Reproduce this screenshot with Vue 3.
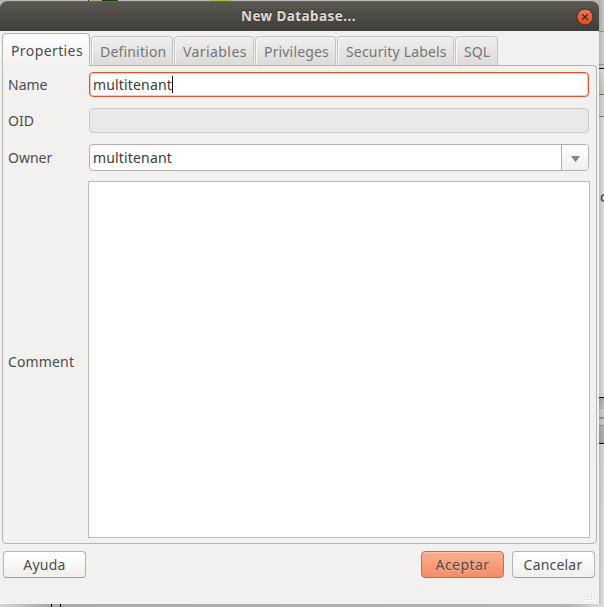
<script setup>
import { ref } from 'vue'

const tabs = [
  { label: 'Properties', cls: 'properties' },
  { label: 'Definition', cls: 'definition' },
  { label: 'Variables', cls: 'variables' },
  { label: 'Privileges', cls: 'privileges' },
  { label: 'Security Labels', cls: 'security' },
  { label: 'SQL', cls: 'sql' },
]
const active = ref('Properties')
const grip = [[10, 0], [7, 3], [10, 3], [4, 6], [7, 6], [10, 6], [1, 9], [4, 9], [7, 9], [10, 9]]
</script>

<template>
  <div class="desktop">
    <div class="top-strip"><i class="a"></i><i class="b"></i><i class="c"></i><i class="d"></i></div>
    <div class="middle">
      <section class="dialog">
        <header class="titlebar">
          <span class="title">New Database...</span>
          <svg class="close" width="18" height="18" viewBox="0 0 18 18">
            <defs>
              <linearGradient id="closeFill" x1="0" y1="0" x2="0" y2="1">
                <stop offset="0" stop-color="#f4794f" />
                <stop offset="1" stop-color="#df4a1c" />
              </linearGradient>
            </defs>
            <circle cx="9" cy="9" r="8" fill="url(#closeFill)" stroke="#35302b" />
            <path d="M6.2 6.2L11.8 11.8M11.8 6.2L6.2 11.8" stroke="#45261a" stroke-width="1.3" />
          </svg>
        </header>
        <nav class="tabs">
          <div v-for="t in tabs" :key="t.label" class="tab" :class="[t.cls, { active: active === t.label }]">
            <span>{{ t.label }}</span>
          </div>
        </nav>
        <main class="panel">
          <div class="row name-row"><label>Name</label><div class="field focus"><span class="value">multitenant</span><i class="caret"></i></div></div>
          <div class="row oid-row"><label>OID</label><div class="field disabled"></div></div>
          <div class="row owner-row">
            <label>Owner</label>
            <div class="field combo">
              <span class="value">multitenant</span>
              <div class="drop"><svg width="9" height="6" viewBox="0 0 9 6"><path d="M.7.5H8.3L4.5 5.5Z" fill="#858585" stroke="#666" stroke-width=".6" /></svg></div>
            </div>
          </div>
          <div class="row comment-row"><label>Comment</label><div class="area"></div></div>
        </main>
        <footer class="actions">
          <div class="btn help"><span>Ayuda</span></div>
          <div class="btn primary"><span>Aceptar</span></div>
          <div class="btn cancel"><span>Cancelar</span></div>
        </footer>
        <div class="resize">
          <svg width="12" height="12" viewBox="0 0 12 12">
            <g v-for="(p, i) in grip" :key="i">
              <rect :x="p[0]" :y="p[1]" width="2" height="2" fill="#fff" />
              <rect :x="p[0]" :y="p[1]" width="1" height="1" fill="#cfcecc" />
            </g>
          </svg>
        </div>
      </section>
      <div class="side"><span class="peek">c</span></div>
    </div>
    <div class="bottom-strip"><i></i><i></i></div>
  </div>
</template>

<style>
body {
  margin: 0;
  overflow: hidden;
}
</style>

<style scoped>
* {
  box-sizing: border-box;
}
.desktop {
  width: 604px;
  height: 607px;
  overflow: hidden;
  display: flex;
  flex-direction: column;
  background: #b9b9b7;
  font-family: "Noto Sans", "Open Sans", sans-serif;
  font-size: 14px;
  line-height: 20px;
  color: #4c4c4c;
  white-space: nowrap;
}
.top-strip {
  height: 1px;
  display: flex;
  flex: none;
}
.top-strip .a { width: 1px; margin-left: 88px; background: #222; }
.top-strip .b { width: 13px; background: #b5a888; }
.top-strip .c { width: 16px; background: #173f14; }
.top-strip .d { width: 20px; margin-left: 93px; background: #a9bd4c; }
.middle {
  display: flex;
  height: 603px;
}
.dialog {
  width: 599px;
  height: 603px;
  display: flex;
  flex-direction: column;
  background: #f2f1f0;
  border-radius: 7px 7px 0 0;
}
.titlebar {
  height: 30px;
  flex: none;
  display: flex;
  align-items: center;
  justify-content: flex-end;
  padding-right: 5px;
  border-radius: 7px 7px 0 0;
  background: linear-gradient(#59574f, #3f3e39);
  border-top: 1px solid #65635b;
}
.title {
  flex: 1;
  margin-top: -1px;
  padding-left: 241px;
  font-weight: 700;
  font-size: 13.5px;
  letter-spacing: .42px;
  color: #dfdbd2;
  text-shadow: 0 -1px 0 #2c2b28;
}
.tabs {
  height: 34px;
  flex: none;
  display: flex;
  align-items: flex-end;
  gap: 1px;
  padding-left: 2px;
}
.tab {
  height: 30px;
  padding: 5px 0 0 8px;
  margin-bottom: -1px;
  border: 1px solid #c5c4c2;
  border-bottom-color: #b6b5b1;
  border-radius: 4px 4px 0 0;
  background: linear-gradient(#f0efee, #dcdbd9);
  box-shadow: inset 1px 1px 0 #f8f8f7;
  color: #757575;
}
.tab.active {
  position: relative;
  height: 33px;
  padding-top: 7px;
  background: linear-gradient(#fff, #f2f1f0);
  border-color: #b6b5b1;
  border-bottom: 0;
  color: #4c4c4c;
}
.properties { width: 88px; letter-spacing: .4px; }
.definition { width: 82px; letter-spacing: .18px; }
.variables { width: 80px; letter-spacing: .42px; }
.privileges { width: 81px; letter-spacing: .16px; }
.security { width: 117px; letter-spacing: .17px; }
.sql { width: 43px; letter-spacing: .1px; }
.panel {
  width: 595px;
  height: 479px;
  flex: none;
  margin-left: 2px;
  padding: 6px 5px 0;
  border: 1px solid #b6b5b1;
  border-radius: 0 4px 4px 4px;
}
.row {
  display: flex;
  align-items: center;
}
.row label {
  width: 81px;
  flex: none;
}
.field {
  width: 500px;
  border: 1px solid #b3b1ad;
  border-radius: 4px;
  background: #fff;
  color: #3c3c3c;
  padding-left: 3px;
  display: flex;
  align-items: center;
}
.value { letter-spacing: .16px; }
.name-row { height: 25px; }
.field.focus {
  height: 25px;
  border-color: #d5572f;
  box-shadow: inset 0 0 0 1px #f3c9bb;
}
.caret {
  width: 1px;
  height: 17px;
  background: #111;
}
.oid-row { height: 25px; margin-top: 11px; }
.field.disabled {
  height: 25px;
  background: #eae9e8;
  border-color: #cdcbc9;
}
.owner-row { height: 27px; margin-top: 11px; }
.combo {
  height: 27px;
  justify-content: space-between;
}
.drop {
  width: 27px;
  height: 25px;
  border-left: 1px solid #b3b1ad;
  border-radius: 0 3px 3px 0;
  background: linear-gradient(#fff, #f0efee);
  display: flex;
  align-items: center;
  justify-content: center;
  padding-top: 2px;
}
.comment-row { height: 357px; margin-top: 10px; }
.comment-row label { width: 80px; padding-top: 4px; letter-spacing: .14px; }
.area {
  width: 502px;
  height: 357px;
  flex: none;
  background: #fff;
  border: 1px solid #bcbbb7;
}
.actions {
  display: flex;
  flex: none;
  gap: 8px;
  margin: 7px 4px 0 3px;
}
.btn {
  width: 83px;
  height: 27px;
  border: 1px solid #b6b4b0;
  border-bottom-color: #a19f9b;
  border-radius: 4px;
  background: linear-gradient(#fff, #f1f0ef);
  display: flex;
  align-items: center;
  justify-content: center;
}
.btn.help { letter-spacing: .25px; }
.btn.cancel { letter-spacing: .2px; padding-right: 1px; }
.btn.primary {
  margin-left: auto;
  border-color: #b0755e;
  background: linear-gradient(#fbad8d, #f58e67);
  box-shadow: inset 0 1px 0 #fcc0a6;
  letter-spacing: .45px;
}
.primary span { text-shadow: 0 1px 0 #fbb89d; }
.resize {
  display: flex;
  justify-content: flex-end;
  padding: 12px 3px 0 0;
}
.side {
  width: 5px;
  height: 603px;
  overflow: hidden;
  padding-top: 186px;
  background:
    linear-gradient(90deg, rgba(0, 0, 0, .14), rgba(0, 0, 0, 0)),
    linear-gradient(#c5c5c5 0 30px, #999 30px 31px, #d1d1d1 31px 63px, #999 63px 64px, #d1d1d1 64px 67px, #000 67px 68px, #e1e1e1 68px, #c8c8c8 93px, #777 93px 94px, #d7d7d7 94px 115px, #777 115px 116px, #dedede 116px 396px, #000 396px 397px, #b3b3af 397px, #c1c1be 409px, #e0e0e0 409px 410px, #cecece 410px 416px, #989898 416px 418px, #cfcfcf 418px 424px, #989898 424px 425px, #b8b8b4 425px, #aaaaa7 442px, #000 442px 443px, #d9d9d9 443px, #e1e1e1);
}
.peek { display: block; padding-left: 1px; color: #333; }
.bottom-strip {
  height: 3px;
  flex: none;
  display: flex;
  gap: 8px;
  padding-left: 51px;
  background: linear-gradient(90deg, #d6d6d6, #aaa 8%, #b3b3b3 94%, #dedede);
}
.bottom-strip i { width: 1px; background: #000; }
</style>
